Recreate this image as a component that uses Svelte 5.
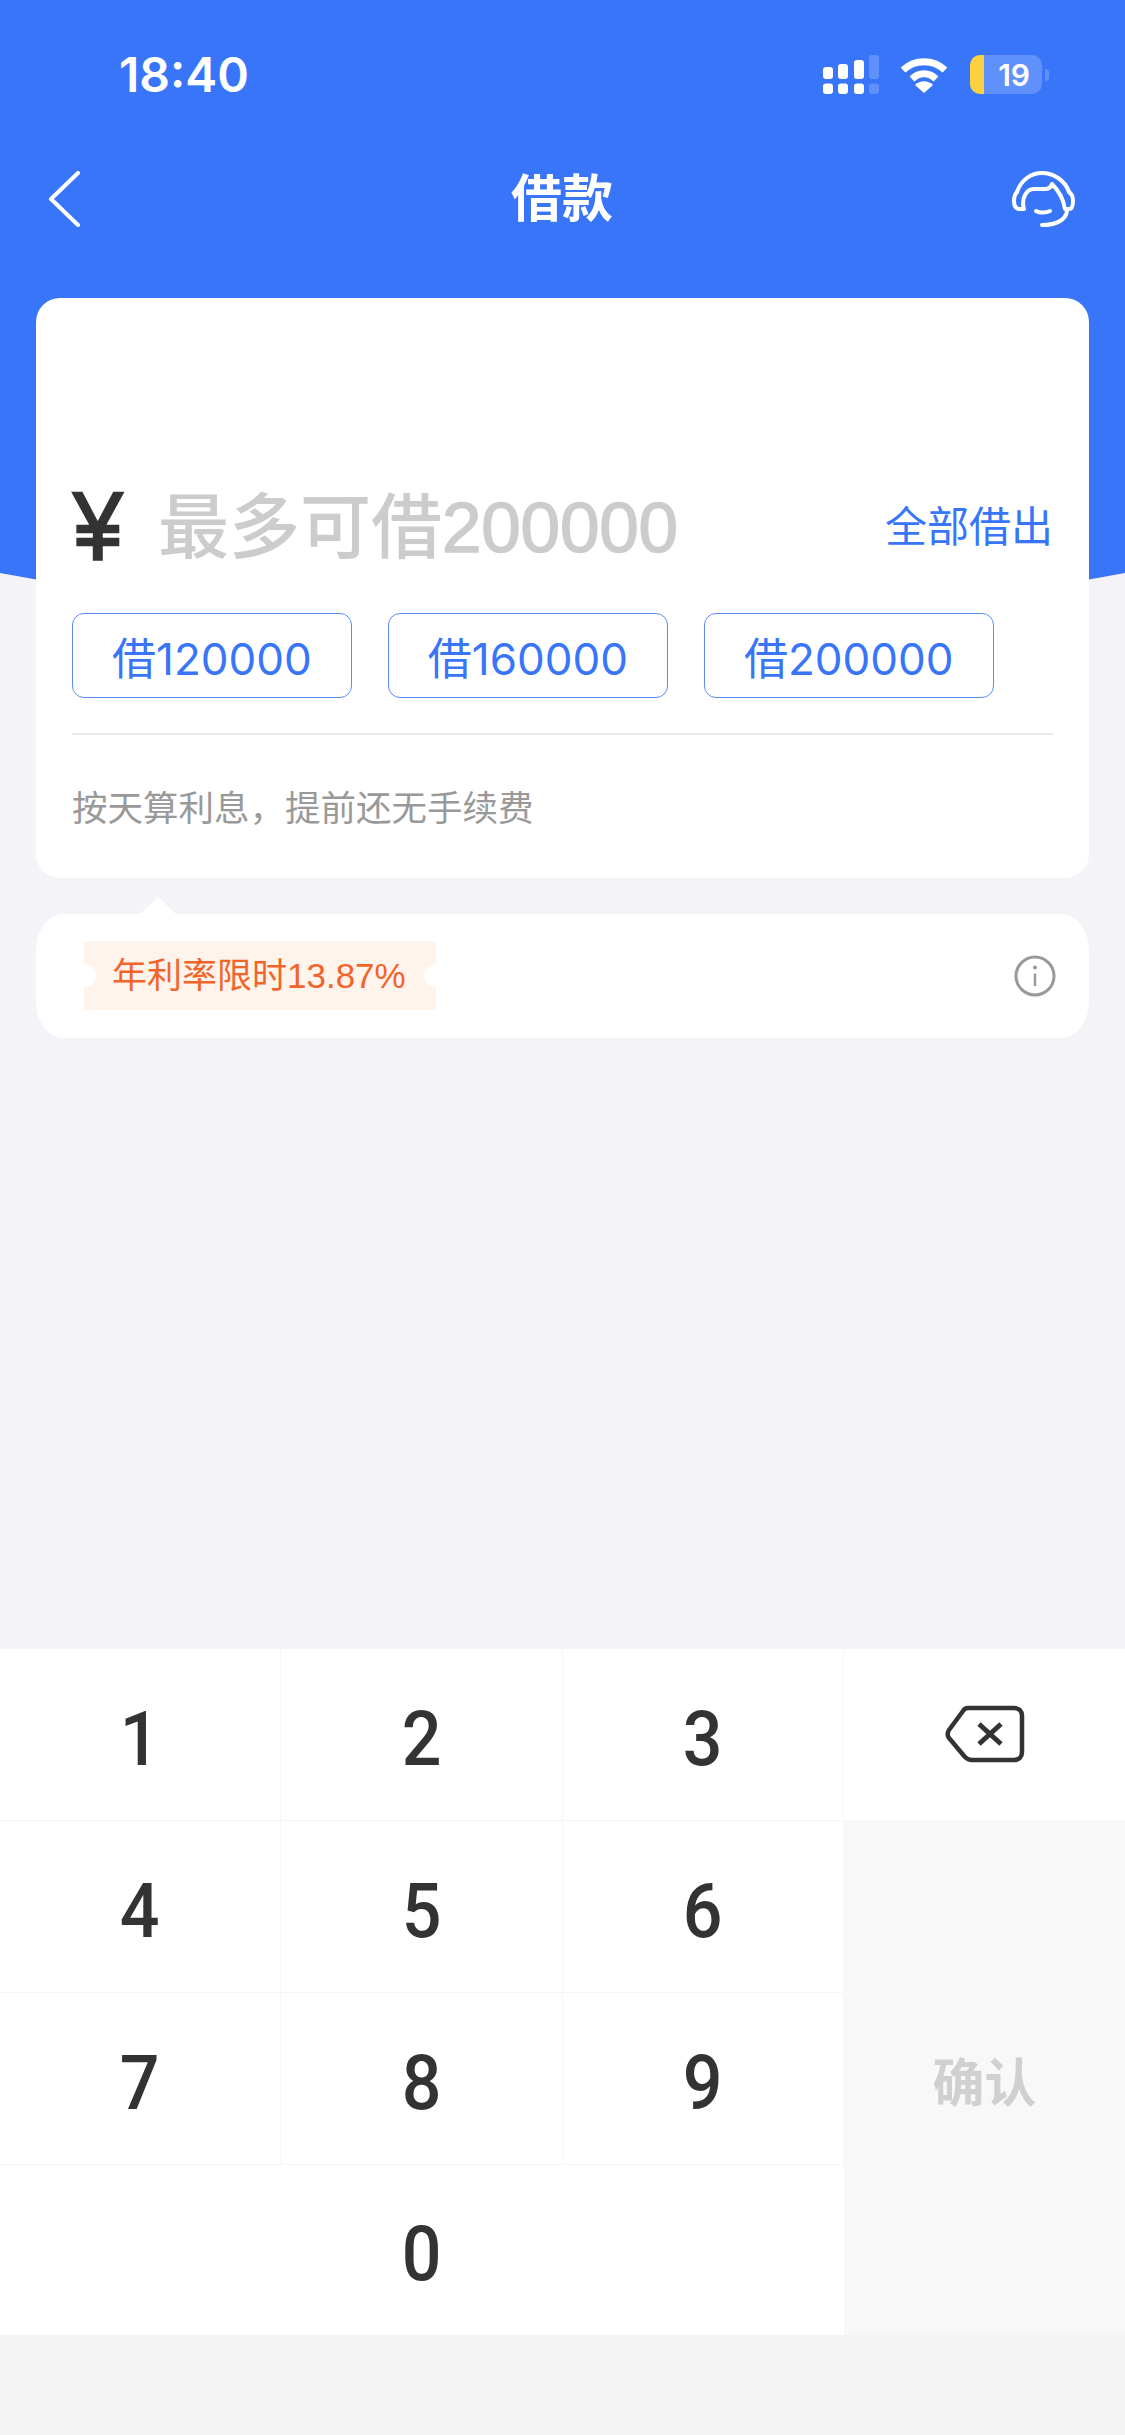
<script>
  const quick = ['120000', '160000', '200000'];
  const rows = [['1','2','3'],['4','5','6'],['7','8','9']];
</script>

<div class="page">
  <div class="hero"></div>
  <div class="status">
    <span class="time">18:40</span>
    <div class="status-icons">
      <svg class="signal" width="56" height="39" viewBox="0 0 56 39" fill="#fff">
        <rect x="0" y="12" width="10" height="12" rx="3"/>
        <rect x="15" y="9" width="10" height="15" rx="3"/>
        <rect x="31" y="5" width="10" height="19" rx="3"/>
        <rect x="46" y="0" width="10" height="24" rx="3" opacity=".2"/>
        <rect x="0" y="28.500" width="10" height="10.500" rx="3"/>
        <rect x="15" y="28.500" width="10" height="10.500" rx="3"/>
        <rect x="31" y="28.500" width="10" height="10.500" rx="3"/>
        <rect x="46" y="28.500" width="10" height="10.500" rx="3" opacity=".2"/>
      </svg>
      <svg class="wifi" width="48" height="36" viewBox="0 0 48 36">
        <path d="M3 13 C15 2 33 2 45 13" fill="none" stroke="#fff" stroke-width="7"/>
        <path d="M12 22 C19 15 29 15 36 22" fill="none" stroke="#fff" stroke-width="7"/>
        <path d="M24 36 L15 28 C20 23 28 23 33 28 Z" fill="#fff"/>
      </svg>
      <div class="battery">
        <span class="battery-level"></span>
        <span class="battery-num">19</span>
      </div>
      <span class="battery-nub"></span>
    </div>
  </div>

  <div class="nav">
    <svg class="back" width="32" height="56" viewBox="0 0 32 56">
      <path d="M30 2 L3 28 L30 54" fill="none" stroke="#fff" stroke-width="4" stroke-linecap="round" stroke-linejoin="round"/>
    </svg>
    <span class="title">借款</span>
    <svg class="support" width="64" height="58" viewBox="0 0 64 58" fill="none" stroke="#fff" stroke-width="4" stroke-linecap="round" stroke-linejoin="round">
      <path d="M5 21 C9 9 19 2 30 2 C41 2 53 9 57 21"/>
      <path d="M5 21 C2 24 2 27 2 30 C2 35 4 38 8 38 L12 38 C9 28 14 18 22 18 L33 18 C36 18 39 16 40 13 C45 18 51 26 53 38 L57 38 C60 38 61 34 61 30 C61 26 60 23 57 21"/>
      <path d="M24 40 C27 42 34 42 38 40"/>
      <path d="M55 40 C54 49 44 54 30 54"/>
    </svg>
  </div>

  <section class="card">
    <div class="amount-row">
      <span class="yen">¥</span>
      <span class="placeholder">最多可借<span class="ph-num">200000</span></span>
      <span class="all">全部借出</span>
    </div>
    <div class="quick">
      {#each quick as q}
        <button class="chip">借{q}</button>
      {/each}
    </div>
    <div class="hint">按天算利息&#65292;提前还无手续费</div>
  </section>

  <section class="rate">
    <span class="arrow"></span>
    <span class="ticket">年利率限时13.87%</span>
    <svg class="info" width="42" height="42" viewBox="0 0 42 42" fill="none" stroke="#999">
      <circle cx="21" cy="21" r="19" stroke-width="3"/>
      <path d="M21 18.500 V31" stroke-width="2.500"/>
      <circle cx="21" cy="12.500" r="2" fill="#999" stroke="none"/>
    </svg>
  </section>

  <div class="spacer"></div>

  <div class="keypad">
    {#each rows as row}
      {#each row as k}
        <button class="key"><span class="digit">{k}</span></button>
      {/each}
      {#if row[0] === '1'}
        <button class="key del" aria-label="删除">
          <svg width="80" height="58" viewBox="0 0 80 58" fill="none" stroke="#333">
            <path d="M23 3 H69 C74 3 77 6 77 11 V47 C77 52 74 55 69 55 H27 C24 55 22 54 20 52 L4 33 C2 30 2 28 4 25 L18 6 C19 4 21 3 23 3 Z" stroke-width="4.500" stroke-linejoin="round"/>
            <path d="M34 19 L56 39 M56 19 L34 39" stroke-width="5"/>
          </svg>
        </button>
      {/if}
      {#if row[0] === '4'}
        <button class="key confirm">确认</button>
      {/if}
    {/each}
    <button class="key zero"><span class="digit">0</span></button>
  </div>
  <div class="foot"></div>
</div>

<style>
  :global(body) { margin: 0; background: #f4f4f8; }
  .page {
    position: relative;
    width: 1125px;
    height: 2435px;
    display: flex;
    flex-direction: column;
    overflow: hidden;
    font-family: "Liberation Sans", "Noto Sans CJK SC", sans-serif;
    background: #f4f4f8;
  }
  .hero {
    position: absolute;
    left: 0; top: 0;
    width: 1125px;
    height: 640px;
    background: #3975f9;
    clip-path: path("M0 0 H1125 V573 Q562 680 0 573 Z");
  }
  .status {
    position: relative;
    height: 150px;
    box-sizing: border-box;
    padding: 55px 76px 0 119px;
    display: flex;
    justify-content: space-between;
    align-items: flex-start;
    color: #fff;
  }
  .time {
    font-family: Inter, sans-serif;
    font-size: 48px;
    font-weight: 600;
    line-height: 40px;
  }
  .status-icons { display: flex; align-items: flex-start; }
  .wifi { margin: 2px 0 0 21px; }
  .battery {
    position: relative;
    width: 72px;
    height: 39px;
    margin-left: 22px;
    border-radius: 10px;
    overflow: hidden;
    background: rgba(255,255,255,.2);
    display: flex;
    justify-content: flex-end;
    align-items: center;
  }
  .battery-level { position: absolute; left: 0; top: 0; bottom: 0; width: 14px; background: #fdd03f; }
  .battery-num {
    font-family: Inter, sans-serif;
    font-size: 30px;
    font-weight: 600;
    padding-right: 12px;
  }
  .battery-nub {
    width: 4px; height: 12px; margin: 14px 0 0 3px;
    border-radius: 0 4px 4px 0;
    background: rgba(255,255,255,.2);
  }
  .nav {
    position: relative;
    height: 148px;
    box-sizing: border-box;
    padding: 21px 49px 0 48px;
    display: grid;
    grid-template-columns: 1fr auto 1fr;
    align-items: start;
  }
  .title {
    font-size: 51px;
    font-weight: 700;
    color: #fff;
    line-height: 56px;
    margin-top: 1px;
  }
  .support { justify-self: end; }
  .card {
    position: relative;
    margin: 0 36px;
    height: 580px;
    box-sizing: border-box;
    padding: 180px 36px 0;
    background: #fff;
    border-radius: 24px;
  }
  .amount-row { display: flex; align-items: center; height: 100px; }
  .yen {
    display: inline-block;
    font-size: 96px;
    font-weight: 400;
    -webkit-text-stroke: 2.500px #333;
    color: #333;
    line-height: 96px;
    width: 85px;
    margin: -4px 0 0 1px;
    transform: scaleX(.92);
    transform-origin: 2px 50%;
  }
  .placeholder {
    flex: 1;
    font-size: 71px;
    color: #ccc;
    font-weight: 500;
    line-height: 100px;
    white-space: nowrap;
  }
  .ph-num { -webkit-text-stroke: 1.500px #ccc; letter-spacing: -.2px; }
  .all {
    font-size: 42px;
    color: #3975f9;
    line-height: 106px;
  }
  .quick {
    display: flex;
    gap: 36px;
    margin-top: 35px;
    padding-bottom: 35px;
    border-bottom: 2px solid #eaeaea;
  }
  .chip {
    height: 85px;
    padding: 0 39px;
    box-sizing: border-box;
    background: #fff;
    border: 1.500px solid #5a8cfa;
    border-radius: 12px;
    color: #3975f9;
    font-family: Inter, "Noto Sans CJK SC", sans-serif;
    font-size: 44px;
  }
  .hint {
    margin-top: 50px;
    font-size: 35.500px;
    line-height: 48px;
    color: #999;
  }
  .rate {
    position: relative;
    margin: 36px 36px 0;
    height: 124px;
    box-sizing: border-box;
    padding: 27px 33px 0 48px;
    background: #fff;
    border-radius: 28px / 36px;
    display: flex;
    justify-content: space-between;
    align-items: flex-start;
  }
  .arrow {
    position: absolute;
    left: 104px;
    top: -17px;
    width: 36px;
    height: 17px;
    background: #fff;
    clip-path: polygon(50% 0, 100% 100%, 0 100%);
  }
  .ticket {
    width: 352px;
    height: 69px;
    box-sizing: border-box;
    padding-left: 28px;
    color: #f2642a;
    font-size: 35px;
    line-height: 69px;
    white-space: nowrap;
    background:
      radial-gradient(circle 12px at 0 50%, #fff 11.500px, transparent 12px),
      radial-gradient(circle 12px at 100% 50%, #fff 11.500px, transparent 12px),
      #fef4ec;
    border-radius: 4px;
  }
  .info { margin-top: 14px; }
  .spacer { flex: 1; }
  .keypad {
    display: grid;
    grid-template-columns: 281px 282px 281px 281px;
    grid-template-rows: 172px 172px 172px 171px;
    background: #fff;
  }
  .key {
    background: #fff;
    border: 0;
    border-top: 1px solid #f6f6f6;
    border-right: 1px solid #f6f6f6;
    padding: 8px 0 0;
    color: #333;
    font-family: Roboto, sans-serif;
    font-weight: 500;
    font-size: 76px;
    box-sizing: border-box;
  }
  .digit { display: inline-block; transform: scaleX(.92); }
  .key.del { border-right: 0; display: flex; align-items: center; justify-content: center; padding: 0 0 2px; }
  .key.confirm {
    grid-column: 4;
    grid-row: 2 / span 3;
    background: #f8f8f8;
    color: #d0d0d0;
    font-family: "Liberation Sans", "Noto Sans CJK SC", sans-serif;
    font-weight: 700;
    font-size: 52px;
    border: 0;
    padding: 3px 0 0;
  }
  .key.zero { grid-column: 1 / span 3; grid-row: 4; border-right: 0; }
  .foot { height: 100px; background: #f4f4f5; }
</style>
